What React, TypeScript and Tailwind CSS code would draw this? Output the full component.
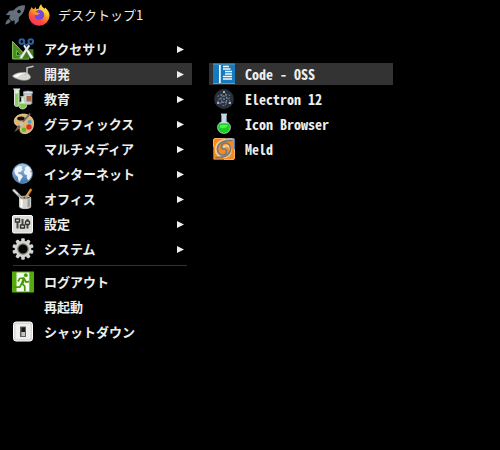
import type { ReactNode } from "react";

type Item = { label: string; icon?: ReactNode; active?: boolean };

const svg = "h-[22px] w-[22px]";

function Rocket() {
  return (
    <svg viewBox="0 0 22 22" className={svg}>
      <path d="M21 1.200C16.500 1 12.500 2.800 9.300 6.600L5.500 6.700 1.800 11l4.500.2L5 14.200l3 3 2.500-1 .2 4.600 3.900-3.600.3-4C19 10 21 6.500 21 1.200z" fill="#64717d" />
      <circle cx="15" cy="7.500" r="1.700" fill="#05080a" />
      <path d="M4.800 15c-1.800.6-2.800 2.500-3.600 5.500 2.800-.6 4.900-1.500 5.600-3.400z" fill="#64717d" />
    </svg>
  );
}

function Firefox() {
  return (
    <svg viewBox="0 0 22 22" className={svg}>
      <defs>
        <linearGradient id="ff" x1="0.8" y1="0" x2="0.25" y2="1">
          <stop offset="0" stopColor="#fff04a" />
          <stop offset="0.4" stopColor="#ffa51e" />
          <stop offset="0.7" stopColor="#ff4a3c" />
          <stop offset="1" stopColor="#f42c72" />
        </linearGradient>
      </defs>
      <path d="M2.500 5.200 3.700 3l1.500 2.200 1.400-.6L7.800 3l.5 2.300C9.300 4.700 10.200 4.500 11 4.500 11 2.500 12 1 13.300.2c.2 2.300 2 3.300 3.600 4.800l.2-1.600c2.700 2 4.500 5 4.500 8.200A10.500 10.300 0 1 1 .6 11.500C.6 9 1.400 6.800 2.500 5.200z" fill="url(#ff)" />
      <circle cx="11.300" cy="11" r="4.900" fill="#7048df" />
      <path d="M4.500 8.500c1.500-1.300 4-1 5.500.2l2 .2c-.3 1.200-2.300 1.300-2.500 2.200-2 .5-3.500-.3-5-2.600z" fill="#ff8d25" />
      <path d="M11 4.600c3 .6 5.500 2.900 5.600 6.200.9-1 .9-2.200.5-3.200 1.500 1.600 2 4 1.200 6 3-4.500.8-7.500-1.400-8.800C15 4.200 13 3.800 11 4.600z" fill="#ffd638" />
    </svg>
  );
}

function Scissors() {
  return (
    <svg viewBox="0 0 22 22" className={svg}>
      <path d="M.6 3.500 17 21H.6z" fill="#458b1d" stroke="#8cc95c" />
      <path d="M4.500 12.500v4.800H9z" fill="#153909" stroke="#8cc95c" strokeWidth=".8" />
      <path d="m9 20.500 8-9.500 4.500.2v9.300z" fill="#3f7d1c" />
      <path d="M12.500 6.500 21.500 19.500l-2.500 1.300L11.500 8z" fill="#fff" stroke="#aaa" strokeWidth=".4" />
      <path d="M16.500 6.500 7.500 19.800l2.300 1L18 8z" fill="#eeeeec" stroke="#aaa" strokeWidth=".4" />
      <circle cx="9.800" cy="3.600" r="2.300" fill="none" stroke="#2f609e" strokeWidth="2" />
      <circle cx="18.800" cy="3.600" r="2.300" fill="none" stroke="#2f609e" strokeWidth="2" />
      <path d="m12 5.300 2.300 2 2.300-2" fill="none" stroke="#2f609e" strokeWidth="1.600" />
    </svg>
  );
}

function Trowel() {
  return (
    <svg viewBox="0 0 22 22" className={svg}>
      <path d="M.5 12.800c4-3.200 9-3.800 14-3.300 2.500 1.500 4.600 3.500 4 5.300-1.500 2.800-7 3.200-11.500 1.700C3.500 15.500.4 14 .5 12.800z" fill="#d7d7d3" stroke="#999" strokeWidth=".5" />
      <path d="M1.500 13c4-2.800 8-3 12.500-2.800-3.500.3-7 1.300-8.500 4.300z" fill="#fff" />
      <path d="m12.500 11.800 2.500-1.300V4.800l6.500-1.500" fill="none" stroke="#c6c6c2" strokeWidth="1.500" />
    </svg>
  );
}

function Lab() {
  return (
    <svg viewBox="0 0 22 22" className={svg}>
      <path d="M11.800 5h8v10.500c0 1.300-8 1.300-8 0z" fill="#c9d1d5" stroke="#8d9ba0" />
      <path d="M14.500 8h4.700v5.500h-4.700z" fill="#a9673f" />
      <ellipse cx="16" cy="4.500" rx="5" ry="1.500" fill="#dfe7ea" stroke="#8a9a9f" strokeWidth=".7" />
      <path d="M2.500 1.500H7v15.300c0 2-4.500 2-4.500 0z" fill="#8fc965" stroke="#dce7df" />
      <path d="M3.300 2h3v3.500h-3z" fill="#e7eeee" />
      <path d="M1.400 1.200h6.700" stroke="#d7dfdf" strokeWidth="1.500" />
      <path d="M9.500 9.200v4c-1.800 1-2.800 2.500-2.800 4.200 0 2 1.800 3.600 4 3.600s4-1.600 4-3.600c0-1.700-1-3.200-2.700-4.200v-4z" fill="#e5eee5" stroke="#b8c9b8" strokeWidth=".8" />
      <path d="M7.400 15.500h6.700c.8 2.700-1 5-3.400 5s-4.100-2.300-3.300-5z" fill="#7ccb45" />
      <path d="M8.400 8.800h4.800" stroke="#d8e4d8" />
    </svg>
  );
}

function Palette() {
  return (
    <svg viewBox="0 0 22 22" className={svg}>
      <path d="M9.500 1.200c5-.7 10.500 1.500 11.800 6.500 1.300 6-1.500 11.800-7 12.800-4.500.8-6.500-1.300-6.300-4 .2-2.500-1.700-3.500-3.500-4.300C.5 10 1.500 2.500 9.500 1.200z" fill="#ddb675" stroke="#f2d9aa" strokeWidth=".8" />
      <ellipse cx="9" cy="5.500" rx="3.800" ry="2.100" fill="#17110a" />
      <circle cx="17.700" cy="8.800" r="1.900" fill="#4a9ed0" />
      <circle cx="17" cy="14" r="2.700" fill="#dc3024" />
      <circle cx="12" cy="16.800" r="2.300" fill="#63b829" />
      <path d="M18.300 .5 9.300 10.500" stroke="#6b645a" strokeWidth="1.600" />
      <path d="m11 9-4 4.500" stroke="#bfc4c6" strokeWidth="2.400" />
      <path d="M6.800 12c-2 1-2 4-4.800 6.800 3.800-.8 6-3.100 6.700-5.200z" fill="#75624d" />
    </svg>
  );
}

function Globe() {
  return (
    <svg viewBox="0 0 22 22" className={svg}>
      <defs>
        <linearGradient id="globe" x1="0" y1="0" x2="0" y2="1">
          <stop offset="0" stopColor="#a9c7e9" />
          <stop offset="1" stopColor="#3d74ae" />
        </linearGradient>
      </defs>
      <circle cx="10.500" cy="10.500" r="9.900" fill="url(#globe)" stroke="#6f9aca" strokeWidth=".8" />
      <path d="M3 5.500 6.500 3l4 .2-1 2 1.400 1.300L8.500 9l-2.300.2.2 1.600 2.700.8 1.800 2-1.600 2.200-1.500 3.200-1.400-1-.5-4-2.400-2.200-1.200-3.200z" fill="#edf3f8" />
      <path d="m12.500 5 2.500-2 2.300 1 2 3.200-1.500 1.300 1.800 1v3l-1.800 3.600-1.700 1.200-1.400-2.500.3-2.600-2.500-1-.8-2.600 1.500-1.600z" fill="#edf3f8" />
    </svg>
  );
}

function PencilCup() {
  return (
    <svg viewBox="0 0 22 22" className={svg}>
      <path d="m1.800 2.300 8 8" stroke="#9fa3a3" strokeWidth="2.800" strokeLinecap="round" />
      <path d="m1.600 2.200 4.500 4" stroke="#e6e8e8" strokeWidth="1.200" />
      <path d="m19.300 1-6.500 10.500" stroke="#c27b20" strokeWidth="2.600" />
      <path d="m18.800 1.200-6.500 9.500" stroke="#efb653" strokeWidth=".9" />
      <path d="M7.500 9.500h11.200v9.300c0 2.400-11.200 2.400-11.200 0z" fill="#d2d2cf" stroke="#f0f0ee" strokeWidth=".7" />
      <path d="M8.500 11h2v8.500c-1-.1-2-.4-2-1z" fill="#fff" />
      <path d="M15.500 11h2.300v7.800l-2.300.7z" fill="#999" />
      <ellipse cx="13.100" cy="9.700" rx="5.500" ry="1.500" fill="#4a4946" stroke="#e8e8e6" strokeWidth=".8" />
      <path d="m9.500 8.500 2 2.200M16.200 6.500l-2.600 4" stroke="#b8a277" strokeWidth="1.600" />
    </svg>
  );
}

function Sliders() {
  return (
    <svg viewBox="0 0 22 22" className={svg}>
      <rect x=".5" y="2.500" width="20" height="17.500" rx="1.500" fill="#dcddd9" stroke="#fafafa" />
      <path d="M5.500 6v9.500M10.500 6v9.500M15.500 6v9.500" stroke="#484b48" strokeWidth="2" />
      <rect x="3.500" y="6" width="4" height="3" fill="#ddd" stroke="#30332f" strokeWidth="1.400" />
      <rect x="8.500" y="12" width="4" height="3" fill="#ddd" stroke="#30332f" strokeWidth="1.400" />
      <rect x="13.500" y="8" width="4" height="3.500" rx="1" fill="#ddd" stroke="#30332f" strokeWidth="1.400" />
    </svg>
  );
}

function Gear() {
  return (
    <svg viewBox="0 0 22 22" className={svg}>
      <g fill="#d3d4d0">
        {[0, 36, 72, 108, 144].map((a) => (
          <rect key={a} x="9.200" y=".3" width="3.600" height="21.400" rx="1" transform={`rotate(${a} 11 11)`} />
        ))}
        <circle cx="11" cy="11" r="8.200" />
      </g>
      <circle cx="11" cy="11" r="5.200" fill="#050505" stroke="#858681" strokeWidth="1.200" />
    </svg>
  );
}

function Exit() {
  return (
    <svg viewBox="0 0 22 22" className={svg}>
      <path d="M0 .5h22v21H0z" fill="#55a80d" />
      <path d="M4.500 1.500h12.800v19H4.500z" fill="#f5faef" />
      <circle cx="13.800" cy="4.200" r="1.900" fill="#479b08" />
      <path d="m12 6.500-2.300 6 3 2.700.2 5M9.700 12.500l-2 3.700H2.500M11.500 7 7.700 7.500 6 10.500M12 7.500l2 3.500 3-.3" fill="none" stroke="#479b08" strokeWidth="1.700" />
      <path d="m10.700 7 2.500.7-1.500 5-2.200-.7z" fill="#479b08" />
    </svg>
  );
}

function PowerSwitch() {
  return (
    <svg viewBox="0 0 22 22" className={svg}>
      <rect x="1.500" y="1" width="19" height="19" rx="2.500" fill="#d8d8d6" stroke="#fff" />
      <rect x="3.500" y="3" width="15" height="15" rx="1" fill="#f0f0ee" />
      <rect x="8" y="5.500" width="6" height="10.500" rx=".5" fill="#5f605d" />
      <path d="M9.500 6.500h3.500v4.500H9.500z" fill="#171816" />
      <path d="M9.500 11h3.500v4H9.500z" fill="#c4c4c2" />
    </svg>
  );
}

function CodeOss() {
  return (
    <svg viewBox="0 0 22 22" className={svg}>
      <path d="M0 1h22v20H0z" fill="#167abf" />
      <path d="M0 1h22M0 20.500h22" stroke="#6d97b0" />
      <path d="M6 2h1.700v18H6z" fill="#fff" />
      <path d="M10 3.500h6M10 6h7.500M12 8.500h7M12 11h7M10 13.500h9M10 16h9" stroke="#f4f8fb" strokeWidth="1.400" />
    </svg>
  );
}

function Electron() {
  return (
    <svg viewBox="0 0 22 22" className={svg}>
      <circle cx="11" cy="11" r="9.900" fill="#2b2e3b" />
      <g fill="none" stroke="#8fb3bd" strokeWidth=".7" strokeDasharray="2 1.500">
        <ellipse cx="11" cy="11" rx="6.800" ry="2.700" transform="rotate(30 11 11)" />
        <ellipse cx="11" cy="11" rx="6.800" ry="2.700" transform="rotate(90 11 11)" />
        <ellipse cx="11" cy="11" rx="6.800" ry="2.700" transform="rotate(150 11 11)" />
      </g>
      <g fill="#c5e8ed">
        <circle cx="11" cy="11" r=".7" />
        <circle cx="11" cy="4" r=".9" />
        <circle cx="5" cy="15" r=".9" />
        <circle cx="17" cy="15" r=".9" />
      </g>
    </svg>
  );
}

function Flask() {
  return (
    <svg viewBox="0 0 22 22" className={svg}>
      <path d="M8.700 1.500v7.200c-2.800 1.100-4.200 3-4.200 5.600 0 3.600 2.900 6.200 6.500 6.200s6.500-2.600 6.500-6.200c0-2.600-1.400-4.500-4.200-5.600V1.500z" fill="#c3dce6" stroke="#a8bcc2" strokeWidth=".7" />
      <path d="M5.500 11.500c2-1.800 9-1.800 11 0 1.500 4.500-1.200 8.500-5.500 8.500s-7-4-5.500-8.500z" fill="#18ce20" />
      <path d="M6.800 12.300c2-.8 6-.8 8.300 0-1.700 3-5.500 3.500-8 2.500z" fill="#54f04d" />
      <path d="M8 1.300h6" stroke="#b8d5e4" strokeWidth="1.500" />
    </svg>
  );
}

function Meld() {
  return (
    <svg viewBox="0 0 22 22" className={svg}>
      <rect x=".5" y=".5" width="21" height="21" rx="1.500" fill="#f48a22" stroke="#f8b060" />
      <path d="M12 .5h8c1 0 1.500.5 1.500 1.500v9" fill="none" stroke="#4879b6" />
      <path d="M.5 9v11c0 1 .5 1.500 1.500 1.500h9" fill="none" stroke="#4879b6" />
      <path d="M19.500 1.500C11 1 3 3.500 3 11.500c0 4.500 3.500 7.500 7.500 7.500 4.500 0 7-3 7-6.500 0-3-2-4.700-4.200-4.700-2 0-3.300 1.500-3.300 3.200" fill="none" stroke="#f9c88e" strokeWidth="2.600" />
      <path d="M19.500 2.500C11 2 4.500 5 4.500 11.200c0 3.500 2.300 5.800 5.200 5.800 2.500 0 4-1.800 3.800-3.800-.2-1.300-1.200-2.200-2.500-2.200" fill="none" stroke="#727b82" strokeWidth="1.700" />
      <path d="M2.500 19.500C11 20 17.500 17 17.500 10.800 17.500 7.300 15.200 5 12.300 5c-2.500 0-4 1.800-3.800 3.800.2 1.300 1.200 2.200 2.500 2.200" fill="none" stroke="#727b82" strokeWidth="1.700" />
    </svg>
  );
}

const categories: Item[] = [
  { label: "アクセサリ", icon: <Scissors /> },
  { label: "開発", icon: <Trowel />, active: true },
  { label: "教育", icon: <Lab /> },
  { label: "グラフィックス", icon: <Palette /> },
  { label: "マルチメディア" },
  { label: "インターネット", icon: <Globe /> },
  { label: "オフィス", icon: <PencilCup /> },
  { label: "設定", icon: <Sliders /> },
  { label: "システム", icon: <Gear /> },
];

const session: Item[] = [
  { label: "ログアウト", icon: <Exit /> },
  { label: "再起動" },
  { label: "シャットダウン", icon: <PowerSwitch /> },
];

const apps: Item[] = [
  { label: "Code - OSS", icon: <CodeOss />, active: true },
  { label: "Electron 12", icon: <Electron /> },
  { label: "Icon Browser", icon: <Flask /> },
  { label: "Meld", icon: <Meld /> },
];

function Menu({ items, arrow, mono }: { items: Item[]; arrow?: boolean; mono?: boolean }) {
  return (
    <ul className="flex flex-col gap-[3px]">
      {items.map(({ label, icon, active }) => (
        <li key={label}>
          <button
            type="button"
            className={`flex h-[22px] w-full items-center px-1 text-left font-bold ${active ? "bg-[#333333]" : "hover:bg-[#333333]"} ${mono ? "font-['Noto_Sans_Mono_CJK_JP','DejaVu_Sans_Mono',monospace] text-[14px]" : "text-[13px]"}`}
          >
            <span className="mr-[10px] w-[22px] shrink-0">{icon}</span>
            <span className="flex-1 whitespace-nowrap leading-[22px]">{label}</span>
            {arrow && (
              <svg viewBox="0 0 7 7" className="mr-1 h-[7px] w-[7px]">
                <path d="M0 0 7 3.500 0 7z" fill="#eeeeec" />
              </svg>
            )}
          </button>
        </li>
      ))}
    </ul>
  );
}

export default function App() {
  return (
    <div className="min-h-screen bg-black font-['Noto_Sans_CJK_JP',sans-serif] text-[#eeeeec]">
      <header className="flex h-[30px] items-center pl-1">
        <button type="button" aria-label="Launcher">
          <Rocket />
        </button>
        <button type="button" aria-label="Firefox" className="ml-[2px]">
          <Firefox />
        </button>
        <span className="ml-2 text-[13px] leading-[22px]">デスクトップ1</span>
      </header>
      <main className="flex items-start gap-[17px] px-2 pt-2">
        <nav className="w-[184px] shrink-0">
          <Menu items={categories} arrow />
          <hr className="mx-[5px] my-[5px] border-[#333333]" />
          <Menu items={session} />
        </nav>
        <nav className="w-[184px] shrink-0 pt-[25px]">
          <Menu items={apps} mono />
        </nav>
      </main>
    </div>
  );
}
